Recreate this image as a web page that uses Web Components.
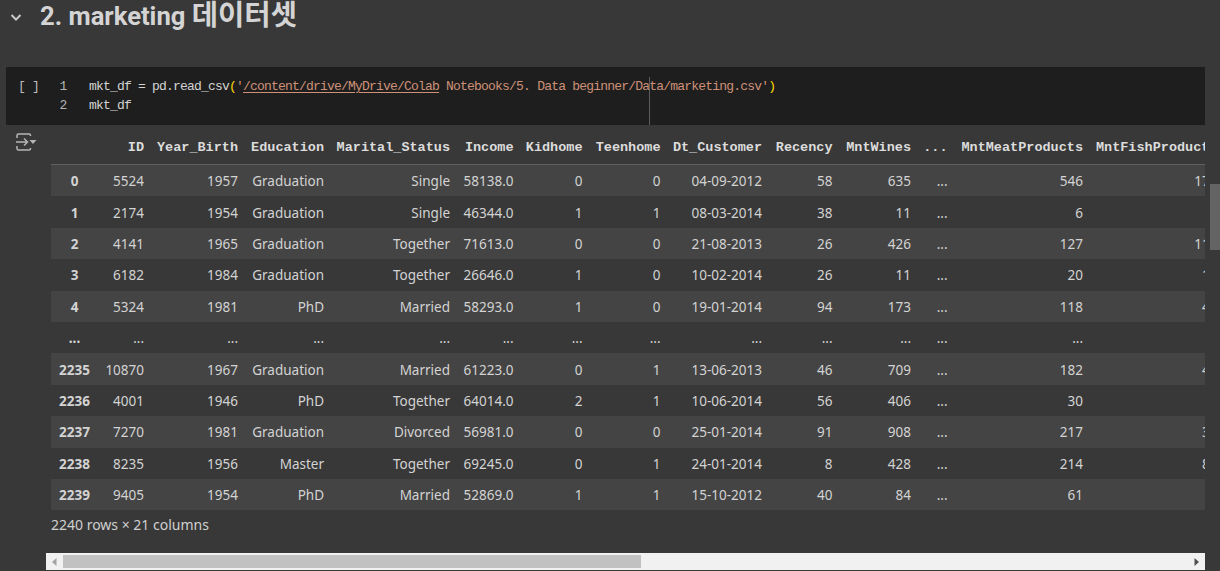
<!DOCTYPE html>
<html lang="ko">
<head>
<meta charset="utf-8">
<title>marketing</title>
<style>
  html, body { margin: 0; height: 571px; overflow: hidden; background: #383838; }
  body { position: relative; font-family: "Noto Sans", "Noto Sans CJK KR", sans-serif; color: #d5d5d5; }
  section-heading span { font-size: 28.6px; }
</style>
</head>
<body>
<section-heading>2. marketing <span>데이터셋</span></section-heading>
<code-cell></code-cell>
<output-area>
  <df-table></df-table>
  <span slot="summary">2240 rows × 21 columns</span>
</output-area>
<page-scrollbar></page-scrollbar>

<script>
class SectionHeading extends HTMLElement {
  constructor() {
    super();
    this.attachShadow({ mode: 'open' });
    this.shadowRoot.innerHTML = `
      <style>
        :host { display: flex; align-items: center; height: 33px; gap: 16px; padding-left: 8px; }
        svg { width: 16px; height: 16px; flex: none; }
        h2 { margin: -2px 0 0; font: 700 25.6px/33px Roboto, "Noto Sans CJK KR", sans-serif; color: #d4d4d4; white-space: nowrap; }
      </style>
      <svg viewBox="0 0 16 16"><path d="M3.5 6 8 10.5 12.5 6" fill="none" stroke="#c8c8c8" stroke-width="2"/></svg>
      <h2><slot></slot></h2>
    `;
  }
}

class CodeCell extends HTMLElement {
  constructor() {
    super();
    this.attachShadow({ mode: 'open' });
    this.shadowRoot.innerHTML = `
      <style>
        :host { display: block; position: relative; margin: 34px 15px 0 6px; height: 58px; background: #1e1e1e; color: #d4d4d4;
                font: 13px/19px "Liberation Mono", monospace; letter-spacing: -0.8px; }
        .inner { display: grid; grid-template-columns: 36px 18px 1fr; padding: 10px 0 0 12px; white-space: pre; }
        .run { color: #bdbdbd; }
        .num { grid-column: 2; text-align: center; color: #b4b4b4; }
        .code { grid-column: 3; padding-left: 17px; }
        .str { color: #ce9178; }
        .str u { text-underline-offset: 2px; }
        .par { color: #ffd700; }
        .ruler { position: absolute; left: 643px; top: 10px; bottom: 0; width: 1px; background: #5c5c5c; }
      </style>
      <div class="inner">
        <span class="run">[ ]</span>
        <span class="num">1</span>
        <span class="code">mkt_df = pd.read_csv<span class="par">(</span><span class="str">'<u>/content/drive/MyDrive/Colab</u> Notebooks/5. Data beginner/Data/marketing.csv'</span><span class="par">)</span></span>
        <span class="num">2</span>
        <span class="code">mkt_df</span>
      </div>
      <div class="ruler"></div>
    `;
  }
}

class OutputArea extends HTMLElement {
  constructor() {
    super();
    this.attachShadow({ mode: 'open' });
    this.shadowRoot.innerHTML = `
      <style>
        :host { display: grid; grid-template-columns: 46px 1159px; height: 446px; }
        .icon { padding: 8px 0 0 16px; }
        svg { display: block; width: 21px; height: 18px; }
        .body { display: flex; flex-direction: column; min-width: 0; }
        .content { padding-left: 5px; flex: 1; min-height: 0; overflow: hidden; }
        ::slotted([slot="summary"]) { display: block; margin-top: 6px; font-size: 14px; line-height: 18px; color: #d0d0d0; }
      </style>
      <div class="icon">
        <svg viewBox="0 0 21 18" fill="none" stroke="#b5b5b5" stroke-width="1.5">
          <path d="M1 5V2.5Q1 1 2.5 1H13Q14.500 1 14.500 2.500V3"/>
          <path d="M1 13V15.500Q1 17 2.500 17H13Q14.500 17 14.500 15.500V15"/>
          <path d="M0 9H11M8 5.500 11.500 9 8 12.500"/>
          <path d="M13.500 7H20.500L17 11Z" fill="#b5b5b5" stroke="none"/>
        </svg>
      </div>
      <div class="body">
        <div class="content"><slot></slot><slot name="summary"></slot></div>
        <h-scrollbar></h-scrollbar>
      </div>
    `;
  }
}

const COLS = [47, 46, 94, 86, 126, 63.5, 69, 78, 101.5, 70.5, 78.5, 36.5, 135.5, 134.5];
const HEAD = ['', 'ID', 'Year_Birth', 'Education', 'Marital_Status', 'Income', 'Kidhome', 'Teenhome', 'Dt_Customer', 'Recency', 'MntWines', '...', 'MntMeatProducts', 'MntFishProducts'];
const ROWS = [
  ['0', '5524', '1957', 'Graduation', 'Single', '58138.0', '0', '0', '04-09-2012', '58', '635', '...', '546', '172'],
  ['1', '2174', '1954', 'Graduation', 'Single', '46344.0', '1', '1', '08-03-2014', '38', '11', '...', '6', '2'],
  ['2', '4141', '1965', 'Graduation', 'Together', '71613.0', '0', '0', '21-08-2013', '26', '426', '...', '127', '111'],
  ['3', '6182', '1984', 'Graduation', 'Together', '26646.0', '1', '0', '10-02-2014', '26', '11', '...', '20', '10'],
  ['4', '5324', '1981', 'PhD', 'Married', '58293.0', '1', '0', '19-01-2014', '94', '173', '...', '118', '46'],
  ['...', '...', '...', '...', '...', '...', '...', '...', '...', '...', '...', '...', '...', '...'],
  ['2235', '10870', '1967', 'Graduation', 'Married', '61223.0', '0', '1', '13-06-2013', '46', '709', '...', '182', '42'],
  ['2236', '4001', '1946', 'PhD', 'Together', '64014.0', '2', '1', '10-06-2014', '56', '406', '...', '30', '0'],
  ['2237', '7270', '1981', 'Graduation', 'Divorced', '56981.0', '0', '0', '25-01-2014', '91', '908', '...', '217', '32'],
  ['2238', '8235', '1956', 'Master', 'Together', '69245.0', '0', '1', '24-01-2014', '8', '428', '...', '214', '80'],
  ['2239', '9405', '1954', 'PhD', 'Married', '52869.0', '1', '1', '15-10-2012', '40', '84', '...', '61', '2']
];

class DfTable extends HTMLElement {
  constructor() {
    super();
    this.attachShadow({ mode: 'open' });
    const cells = (row, tag) => row.map(v => `<${tag}>${v}</${tag}>`).join('');
    this.shadowRoot.innerHTML = `
      <style>
        :host { display: block; overflow: hidden; font-size: 13.5px; color: #d3d3d3; }
        .row { display: grid; grid-template-columns: ${COLS.map(c => c + 'px').join(' ')}; width: max-content; min-width: 100%; align-items: center; white-space: nowrap; }
        .row > * { display: block; text-align: right; font-weight: 400; }
        .head { height: 40px; border-bottom: 1px solid #616161; box-sizing: border-box; padding-top: 6px;
                font: 700 13.5px/18px "Liberation Mono", monospace; color: #dcdcdc; }
        .head > * { font-weight: 700; }
        .body .row { height: 31.4px; box-sizing: border-box; padding-top: 1px; }
        .body .row:nth-child(odd) { background: #444; }
        .row > :first-child { text-align: center; }
        .body .row > :first-child { font-weight: 700; }
      </style>
      <div class="row head">${cells(HEAD, 'span')}</div>
      <div class="body">${ROWS.map(r => `<div class="row">${cells(r, 'span')}</div>`).join('')}</div>
    `;
  }
}

class HScrollbar extends HTMLElement {
  constructor() {
    super();
    this.attachShadow({ mode: 'open' });
    this.shadowRoot.innerHTML = `
      <style>
        :host { display: flex; align-items: center; height: 17px; background: #f1f1f1; box-sizing: border-box; margin-bottom: 1px; flex: none; }
        .arrow { flex: none; width: 17px; height: 13px; display: flex; align-items: center; justify-content: center; }
        .thumb { flex: none; width: 578px; height: 13px; background: #c1c1c1; }
        .space { flex: 1; }
        svg { width: 5px; height: 8px; }
      </style>
      <div class="arrow"><svg viewBox="0 0 5 8"><path d="M4.500 0V8L0 4Z" fill="#a3a3a3"/></svg></div>
      <div class="thumb"></div>
      <div class="space"></div>
      <div class="arrow"><svg viewBox="0 0 5 8"><path d="M.5 0V8L5 4Z" fill="#505050"/></svg></div>
    `;
  }
}

class PageScrollbar extends HTMLElement {
  constructor() {
    super();
    this.attachShadow({ mode: 'open' });
    this.shadowRoot.innerHTML = `
      <style>
        :host { display: block; position: absolute; right: 0; top: 184px; width: 10px; height: 66px; background: #646464; }
      </style>
    `;
  }
}

customElements.define('section-heading', SectionHeading);
customElements.define('code-cell', CodeCell);
customElements.define('output-area', OutputArea);
customElements.define('df-table', DfTable);
customElements.define('h-scrollbar', HScrollbar);
customElements.define('page-scrollbar', PageScrollbar);
</script>
</body>
</html>
